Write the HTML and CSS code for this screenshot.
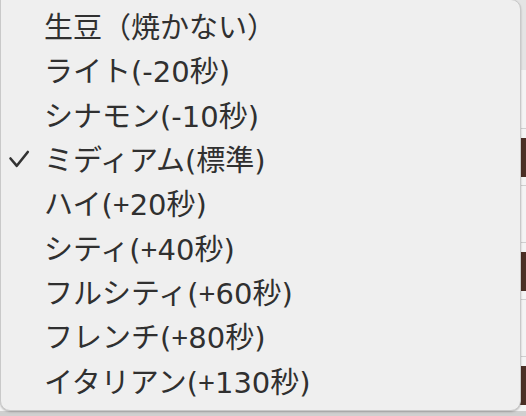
FILE: index.html
```html
<!DOCTYPE html>
<html lang="ja">
<head>
<meta charset="utf-8">
<link rel="stylesheet" href="styles.css">
</head>
<body>
<div class="page">
  <div class="page-header"></div>
  <div class="page-list">
    <div class="card"><div class="thumb"></div></div>
    <div class="card"><div class="thumb"></div></div>
    <div class="card"><div class="thumb"></div></div>
  </div>
</div>
<div class="menu">
  <div class="item"><span class="check"></span><span class="label">生豆（焼かない）</span></div>
  <div class="item"><span class="check"></span><span class="label">ライト(-20秒)</span></div>
  <div class="item"><span class="check"></span><span class="label">シナモン(-10秒)</span></div>
  <div class="item selected"><span class="check"><svg width="44" height="44" viewBox="0 0 44 44"><polyline points="10.5,19.5 16.8,26.8 27.8,13" fill="none" stroke="#333" stroke-width="2.6" stroke-linecap="round" stroke-linejoin="round"/></svg></span><span class="label">ミディアム(標準)</span></div>
  <div class="item"><span class="check"></span><span class="label">ハイ(<span class="sign">+</span>20秒)</span></div>
  <div class="item"><span class="check"></span><span class="label">シティ(<span class="sign">+</span>40秒)</span></div>
  <div class="item"><span class="check"></span><span class="label">フルシティ(<span class="sign">+</span>60秒)</span></div>
  <div class="item"><span class="check"></span><span class="label">フレンチ(<span class="sign">+</span>80秒)</span></div>
  <div class="item"><span class="check"></span><span class="label">イタリアン(<span class="sign">+</span>130秒)</span></div>
</div>
</body>
</html>
```
FILE: styles.css
```css
html, body {
  margin: 0;
  padding: 0;
}
body {
  width: 526px;
  height: 416px;
  overflow: hidden;
  background: #d0d0d0;
  position: relative;
  font-family: "DejaVu Sans", "Noto Sans CJK JP", sans-serif;
}
.page {
  height: 411px;
  background: #f4f4f4;
  display: flex;
  flex-direction: column;
}
.page-header {
  height: 70px;
  background: #e4e4e4;
  flex: none;
}
.page-list {
  padding-top: 58px;
  display: flex;
  flex-direction: column;
  gap: 56px;
}
.card {
  border-top: 1px solid #cfcfcf;
  border-bottom: 1px solid #cfcfcf;
  padding: 9px 0 8px;
  display: flex;
  justify-content: flex-end;
}
.thumb {
  width: 60px;
  height: 39px;
  background: #4b2f25;
}
.menu {
  position: absolute;
  left: 0;
  top: -1px;
  width: 521px;
  height: 412px;
  box-sizing: border-box;
  background: #efefef;
  border: 1px solid #c9c9c9;
  border-radius: 0 10px 10px 10px;
  box-shadow: 0 1px 2px rgba(0, 0, 0, 0.25);
  padding-top: 6px;
  display: flex;
  flex-direction: column;
}
.item {
  height: 44.3px;
  display: flex;
  align-items: center;
  color: #303030;
  font-size: 29px;
}
.check {
  width: 43px;
  height: 44px;
  flex: none;
  display: block;
}
.check svg {
  display: block;
  margin-left: -1px;
}
.label {
  white-space: nowrap;
  line-height: 44px;
}
.sign {
  font-family: "Liberation Sans", sans-serif;
}
```
